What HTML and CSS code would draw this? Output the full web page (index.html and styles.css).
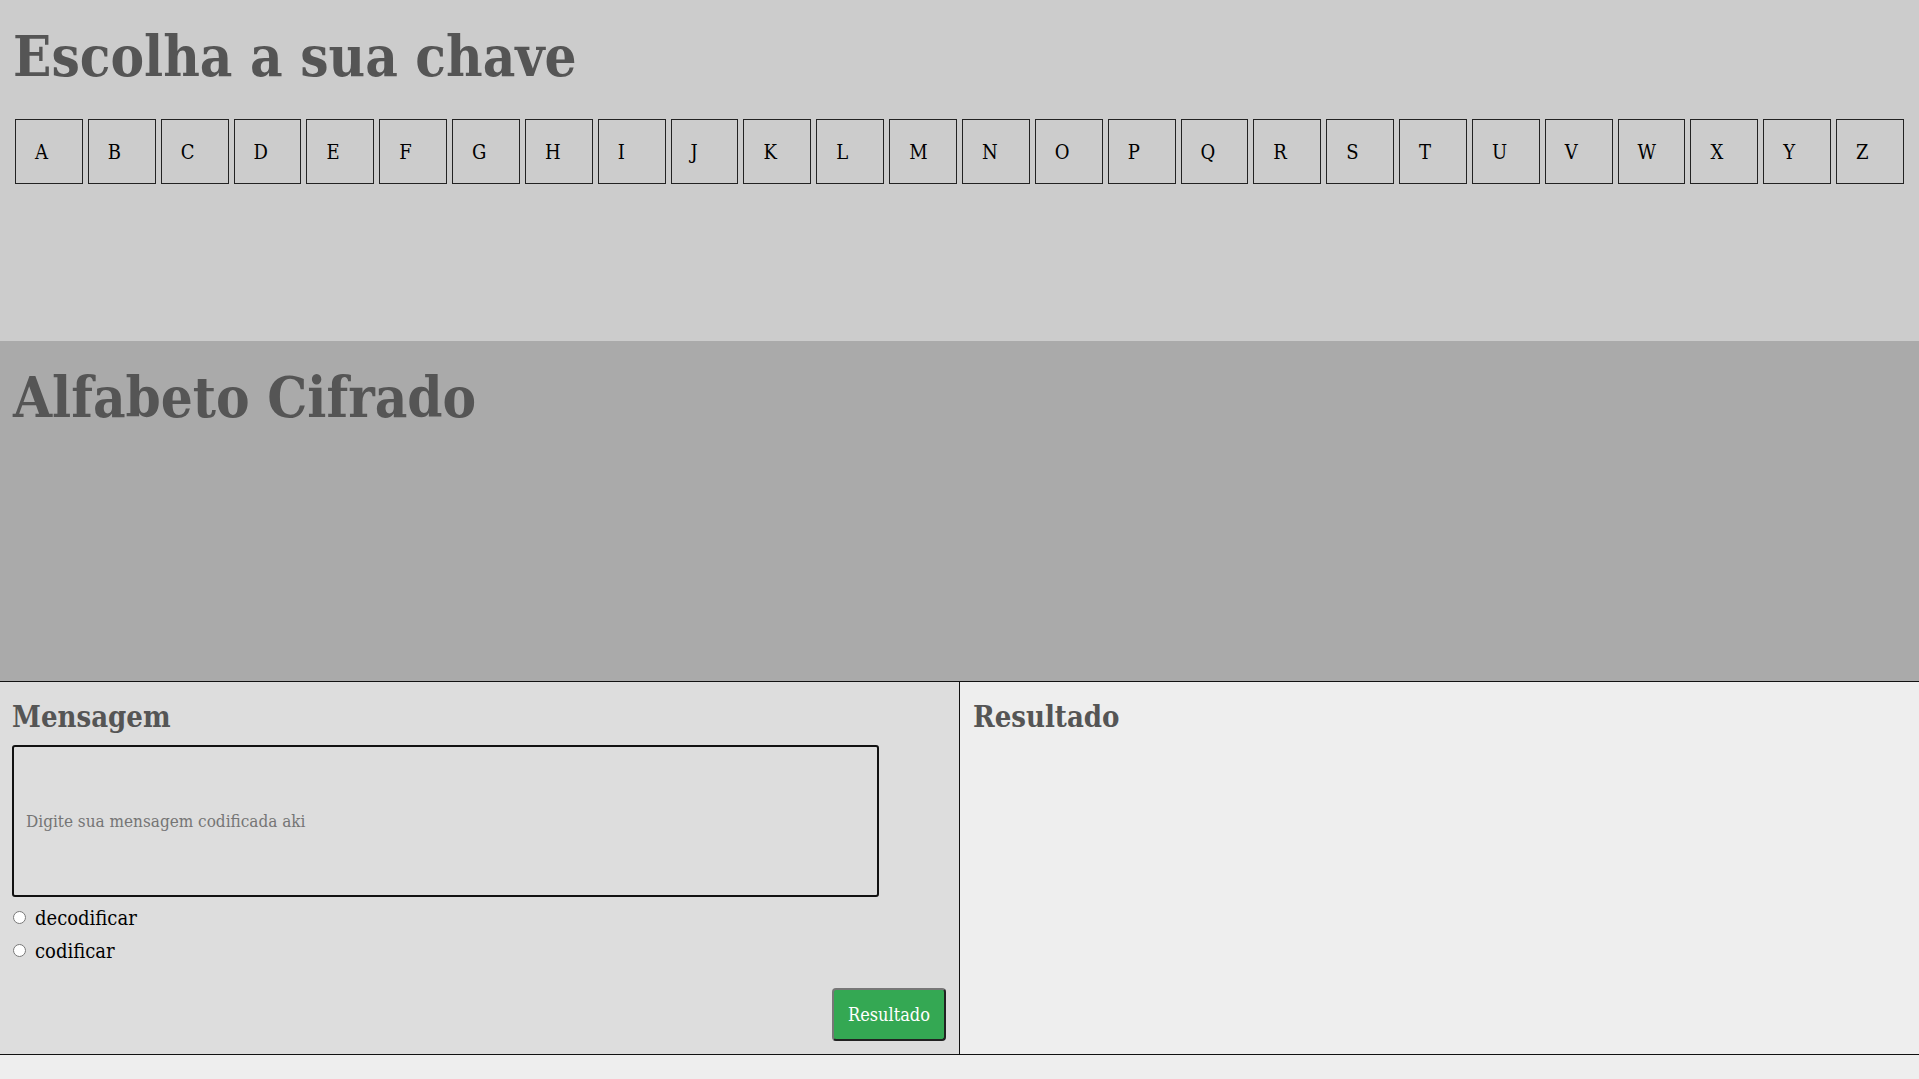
FILE: index.html
```html
<!DOCTYPE html>
<html lang="pt">
<head>
<meta charset="utf-8">
<title>Cifra</title>
<link rel="stylesheet" href="styles.css">
</head>
<body>
<section class="sec sec-key">
  <h1 class="title">Escolha a sua chave</h1>
  <div class="keys">
    <button class="key">A</button><button class="key">B</button><button class="key">C</button><button class="key">D</button><button class="key">E</button><button class="key">F</button><button class="key">G</button><button class="key">H</button><button class="key">I</button><button class="key">J</button><button class="key">K</button><button class="key">L</button><button class="key">M</button><button class="key">N</button><button class="key">O</button><button class="key">P</button><button class="key">Q</button><button class="key">R</button><button class="key">S</button><button class="key">T</button><button class="key">U</button><button class="key">V</button><button class="key">W</button><button class="key">X</button><button class="key">Y</button><button class="key">Z</button>
  </div>
</section>
<section class="sec sec-alpha">
  <h1 class="title">Alfabeto Cifrado</h1>
</section>
<section class="work">
  <div class="panel panel-msg">
    <h2 class="sub">Mensagem</h2>
    <input class="msg" type="text" placeholder="Digite sua mensagem codificada aki">
    <label class="opt"><input class="radio" type="radio" name="modo">decodificar</label>
    <label class="opt"><input class="radio" type="radio" name="modo">codificar</label>
    <button class="btn">Resultado</button>
  </div>
  <div class="panel panel-res">
    <h2 class="sub">Resultado</h2>
  </div>
</section>
</body>
</html>
```

FILE: styles.css
```css
* { box-sizing: border-box; }
html, body {
  margin: 0;
  background: #eee;
  font-family: "DejaVu Serif", "Liberation Serif", serif;
  font-stretch: condensed;
}
button, input {
  font-stretch: condensed;
}
.sec {
  padding: 21px 0 0 0;
}
.sec-key {
  background: #ccc;
  height: 341px;
}
.sec-alpha {
  background: #aaa;
  height: 340px;
}
.title {
  margin: 0 0 0 13px;
  font-size: 56px;
  line-height: 70px;
  font-weight: bold;
  color: #555;
}
.keys {
  display: flex;
  gap: 5px;
  padding: 0 15px;
  margin-top: 28px;
}
.key {
  flex: 1;
  height: 65px;
  background: transparent;
  border: 1px solid #222;
  border-radius: 0;
  font-family: "DejaVu Serif", serif;
  font-size: 20px;
  color: #000;
  text-align: left;
  padding: 0 0 0 19px;
}
.work {
  display: flex;
  border-top: 1px solid #111;
  border-bottom: 1px solid #111;
  height: 374px;
}
.panel {
  display: flex;
  flex-direction: column;
}
.panel-msg {
  width: 960px;
  background: #ddd;
  border-right: 1px solid #111;
  padding: 15px 13px 13px 12px;
}
.panel-res {
  flex: 1;
  background: #eee;
  padding: 15px 13px 13px 13px;
}
.sub {
  margin: 0;
  font-size: 29px;
  line-height: 40px;
  font-weight: bold;
  color: #555;
}
.msg {
  margin-top: 8px;
  width: 867px;
  height: 152px;
  border: 2px solid #111;
  border-radius: 3px;
  background: #ddd;
  padding: 0 12px;
  font-family: "DejaVu Serif", serif;
  font-size: 17px;
}
.msg::placeholder {
  color: #757575;
}
.opt {
  display: flex;
  align-items: center;
  height: 33px;
  font-size: 20px;
  color: #000;
}
.opt:first-of-type {
  margin-top: 4px;
}
.radio {
  width: 13px;
  height: 13px;
  margin: 0 9px 0 1px;
}
.btn {
  margin-top: auto;
  align-self: flex-end;
  width: 114px;
  height: 53px;
  background: #34a853;
  color: #fff;
  border: 2px solid;
  border-color: #777 #222 #222 #777;
  border-radius: 4px;
  font-family: "DejaVu Serif", serif;
  font-size: 18px;
  padding: 0;
}
```
